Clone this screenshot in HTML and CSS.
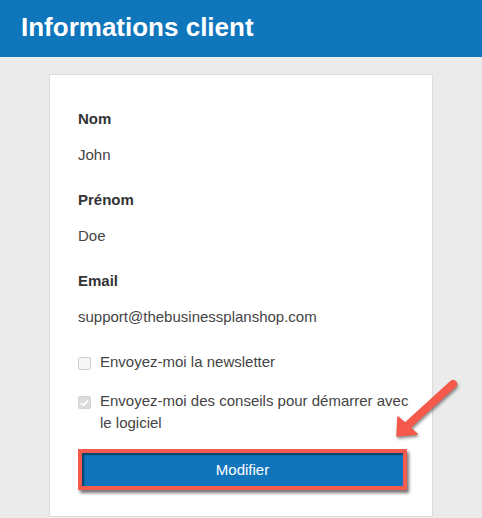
FILE: index.html
```html
<!DOCTYPE html>
<html lang="fr">
<head>
<meta charset="utf-8">
<title>Informations client</title>
<link rel="stylesheet" href="styles.css">
</head>
<body>
<header class="topbar">
  <h1 class="title">Informations client</h1>
</header>
<main class="page">
  <section class="card">
    <dl class="fields">
      <dt class="label">Nom</dt>
      <dd class="value">John</dd>
      <dt class="label">Prénom</dt>
      <dd class="value">Doe</dd>
      <dt class="label">Email</dt>
      <dd class="value">support@thebusinessplanshop.com</dd>
    </dl>
    <label class="check">
      <span class="box"></span>
      <span class="check-text">Envoyez-moi la newsletter</span>
    </label>
    <label class="check">
      <span class="box box-checked">
        <svg viewBox="0 0 12 12" width="12" height="12"><path d="M2.5 6.3 L5 8.6 L9.6 3.4" fill="none" stroke="#fff" stroke-width="1.8" stroke-linecap="round" stroke-linejoin="round"/></svg>
      </span>
      <span class="check-text">Envoyez-moi des conseils pour démarrer avec le logiciel</span>
    </label>
    <button class="btn" type="button">Modifier</button>
  </section>
  <svg class="arrow" viewBox="380 370 90 80" width="90" height="80" aria-hidden="true">
    <line x1="453" y1="384" x2="408" y2="425" stroke="#f4594c" stroke-width="8" stroke-linecap="round"/>
    <polygon points="397,436 398,417 406,424 417,434" fill="#f4594c" stroke="#f4594c" stroke-width="1.5" stroke-linejoin="round"/>
  </svg>
</main>
</body>
</html>
```

FILE: styles.css
```css
* { box-sizing: border-box; }

html, body {
  margin: 0;
  padding: 0;
}

body {
  background: #ebebeb;
  font-family: "Liberation Sans", Arial, sans-serif;
  color: #333;
  height: 518px;
  overflow: hidden;
}

.topbar {
  height: 57px;
  background: #1076bc;
  padding: 12px 0 0 21px;
}

.title {
  margin: 0;
  font-size: 26px;
  line-height: 30px;
  font-weight: bold;
  color: #fff;
}

.page {
  position: relative;
  padding-top: 17px;
}

.card {
  margin-left: 49px;
  width: 384px;
  height: 443px;
  background: #fff;
  border: 1px solid #dcdcdc;
  padding: 34px 25px 0 28px;
}

.fields {
  margin: 0;
}

.label {
  font-size: 15px;
  line-height: 20px;
  font-weight: bold;
  color: #333;
  margin: 0 0 16px;
}

.value {
  font-size: 15px;
  line-height: 20px;
  color: #444;
  margin: 0 0 25px;
}

.value:last-child {
  margin-bottom: 24px;
}

.check {
  display: flex;
  align-items: flex-start;
  gap: 9px;
  font-size: 15px;
  line-height: 22px;
  color: #444;
  margin: 0 -8px 17px 0;
}

.check + .check {
  margin-bottom: 15px;
}

.box {
  flex: none;
  width: 13px;
  height: 13px;
  margin-top: 6px;
  border: 1px solid #cfcfcf;
  border-radius: 2px;
  background: #f7f7f7;
  display: flex;
  align-items: center;
  justify-content: center;
}

.box-checked {
  background: #dcdcdc;
  border-color: #d4d4d4;
}

.btn {
  display: block;
  width: 100%;
  height: 41px;
  margin: 0;
  padding: 0;
  background: #1075bb;
  border: 4px solid #f55a4e;
  color: #fff;
  font-family: "Liberation Sans", Arial, sans-serif;
  font-size: 15px;
  line-height: 33px;
  text-align: center;
  box-shadow: 2px 3px 3px rgba(0, 0, 0, 0.55), inset 2px 2px 2px rgba(0, 0, 0, 0.45);
  cursor: pointer;
}

.arrow {
  position: absolute;
  left: 380px;
  top: 313px;
  filter: drop-shadow(1px 2px 1.5px rgba(0, 0, 0, 0.45));
}
```
